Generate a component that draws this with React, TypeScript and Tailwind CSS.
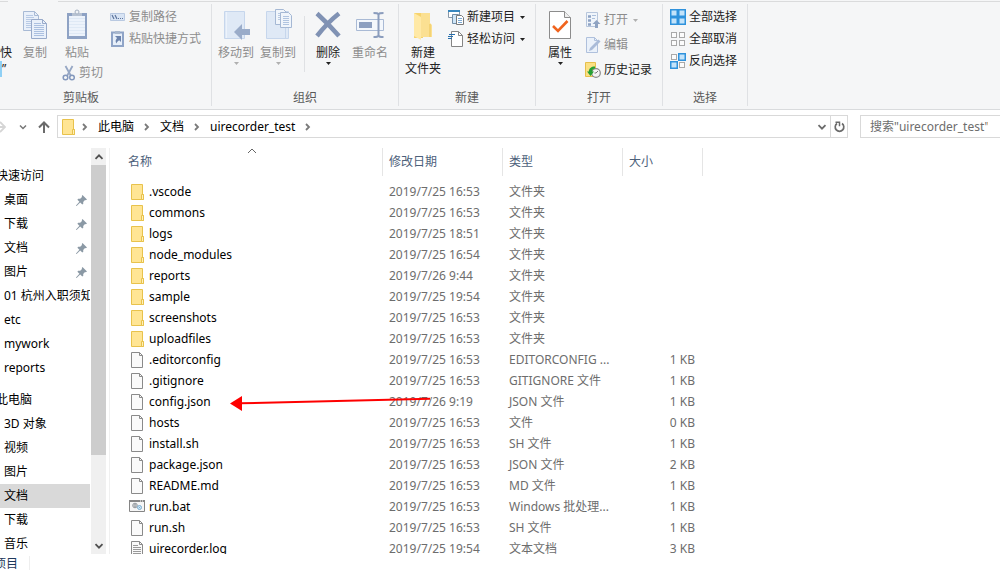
import React from 'react';
import clsx from 'clsx';

interface FileEntry {
  name: string;
  date: string;
  type: string;
  size?: string;
  icon: 'folder' | 'file' | 'bat' | 'log';
}

interface NavEntry {
  label: string;
  pinned?: boolean;
  active?: boolean;
}

const FILES: FileEntry[] = [
  { name: '.vscode', date: '2019/7/25 16:53', type: '文件夹', icon: 'folder' },
  { name: 'commons', date: '2019/7/25 16:53', type: '文件夹', icon: 'folder' },
  { name: 'logs', date: '2019/7/25 18:51', type: '文件夹', icon: 'folder' },
  { name: 'node_modules', date: '2019/7/25 16:54', type: '文件夹', icon: 'folder' },
  { name: 'reports', date: '2019/7/26 9:44', type: '文件夹', icon: 'folder' },
  { name: 'sample', date: '2019/7/25 19:54', type: '文件夹', icon: 'folder' },
  { name: 'screenshots', date: '2019/7/25 16:53', type: '文件夹', icon: 'folder' },
  { name: 'uploadfiles', date: '2019/7/25 16:53', type: '文件夹', icon: 'folder' },
  { name: '.editorconfig', date: '2019/7/25 16:53', type: 'EDITORCONFIG ...', size: '1 KB', icon: 'file' },
  { name: '.gitignore', date: '2019/7/25 16:53', type: 'GITIGNORE 文件', size: '1 KB', icon: 'file' },
  { name: 'config.json', date: '2019/7/26 9:19', type: 'JSON 文件', size: '1 KB', icon: 'file' },
  { name: 'hosts', date: '2019/7/25 16:53', type: '文件', size: '0 KB', icon: 'file' },
  { name: 'install.sh', date: '2019/7/25 16:53', type: 'SH 文件', size: '1 KB', icon: 'file' },
  { name: 'package.json', date: '2019/7/25 16:53', type: 'JSON 文件', size: '2 KB', icon: 'file' },
  { name: 'README.md', date: '2019/7/25 16:53', type: 'MD 文件', size: '1 KB', icon: 'file' },
  { name: 'run.bat', date: '2019/7/25 16:53', type: 'Windows 批处理...', size: '1 KB', icon: 'bat' },
  { name: 'run.sh', date: '2019/7/25 16:53', type: 'SH 文件', size: '1 KB', icon: 'file' },
  { name: 'uirecorder.log', date: '2019/7/25 19:54', type: '文本文档', size: '3 KB', icon: 'log' },
];

const QUICK_ACCESS: NavEntry[] = [
  { label: '桌面', pinned: true },
  { label: '下载', pinned: true },
  { label: '文档', pinned: true },
  { label: '图片', pinned: true },
  { label: '01 杭州入职须知' },
  { label: 'etc' },
  { label: 'mywork' },
  { label: 'reports' },
];

const THIS_PC: NavEntry[] = [
  { label: '3D 对象' },
  { label: '视频' },
  { label: '图片' },
  { label: '文档', active: true },
  { label: '下载' },
  { label: '音乐' },
];

/* ---------- Small icons ---------- */

function FolderIcon() {
  return (
    <svg width="16" height="16" viewBox="0 0 16 16" className="shrink-0">
      <path d="M2.5.5h11v10h1v5h-12z" fill="#ffe594" stroke="#e8c24c" />
      <path d="M12.5 15.500v-5h2v5z" fill="#fff0b8" stroke="#e8c24c" />
    </svg>
  );
}

function FileIcon({ lined = false }: { lined?: boolean }) {
  return (
    <svg width="16" height="16" viewBox="0 0 16 16" className="shrink-0">
      <path d="M2.500.5h8l3 3v12h-11z" fill="#fafafa" stroke="#8a8a8a" />
      <path d="M10.500.5v3h3" fill="none" stroke="#8a8a8a" />
      {lined && <path d="M4 4.500h5M4 6.500h8M4 8.500h8M4 10.500h8M4 12.500h8" stroke="#9a9a9a" />}
    </svg>
  );
}

function BatIcon() {
  return (
    <svg width="16" height="16" viewBox="0 0 16 16" className="shrink-0">
      <path d="M.5 1.500h15v11H.5z" fill="#f6f6f6" stroke="#858585" />
      <path d="M0 2h16" stroke="#858585" strokeWidth="2" />
      <path d="M11 2h1M13 2h1" stroke="#fff" />
      <circle cx="6" cy="6.500" r="2.300" fill="#eee" stroke="#8f959b" />
      <circle cx="6" cy="6.500" r="1" fill="none" stroke="#8f959b" />
      <circle cx="10.500" cy="8.500" r="2" fill="#d8ecf8" stroke="#78acd0" />
      <circle cx="10.500" cy="8.500" r=".7" fill="#78acd0" />
    </svg>
  );
}

function EntryIcon({ icon }: { icon: FileEntry['icon'] }) {
  if (icon === 'folder') return <FolderIcon />;
  if (icon === 'bat') return <BatIcon />;
  return <FileIcon lined={icon === 'log'} />;
}

function PinIcon() {
  return (
    <svg width="11" height="11" viewBox="0 0 11 11" className="shrink-0">
      <path d="M6.500 0 11 4.500 9.800 5.200 9 5 7.200 6.900 7.300 8.800 6.300 9.600 4.200 7.500.6 11 0 10.800 0 10.400 3.400 6.700 1.400 4.700 2.200 3.700 4.200 3.800 6 2 5.800 1z" fill="#8b99a5" />
    </svg>
  );
}

function Chevron({ dir, className }: { dir: 'right' | 'down' | 'up'; className?: string }) {
  const paths = {
    right: 'M3 2l3 3-3 3',
    down: 'M1.500 3.200 5 6.700l3.500-3.500',
    up: 'M1.500 6.800 5 3.300l3.500 3.500',
  };
  return (
    <svg width="10" height="10" viewBox="0 0 10 10" className={clsx('shrink-0', className)}>
      <path d={paths[dir]} fill="none" stroke="currentColor" strokeWidth="1.800" />
    </svg>
  );
}

function Caret({ muted = false }: { muted?: boolean }) {
  return (
    <svg width="5" height="3" viewBox="0 0 5 3" className="shrink-0">
      <path d="M0 0h5L2.500 3z" fill={muted ? '#b0b0b0' : '#222'} />
    </svg>
  );
}

/* ---------- Ribbon icons ---------- */

function CopyIcon() {
  return (
    <svg width="26" height="32" viewBox="0 0 26 32">
      <path d="M1.500 3.500h11l4 4v15h-15z" fill="#e9f0fa" stroke="#a8bad5" />
      <path d="M12.500 3.500v4h4" fill="none" stroke="#a8bad5" />
      <path d="M4 7.500h7M4 9.500h8M4 11.500h8M4 13.500h6M4 15.500h6M4 17.500h6M4 19.500h6" stroke="#b8cae5" />
      <path d="M9.500 11.500h11l4 4v15h-15z" fill="#e9f0fa" stroke="#98aaca" />
      <path d="M20.500 11.500v4h4" fill="none" stroke="#98aaca" />
      <path d="M12 15.500h7M12 17.500h10M12 19.500h10M12 21.500h10M12 23.500h10M12 25.500h10M12 27.500h10" stroke="#abc0e0" />
    </svg>
  );
}

function PasteIcon() {
  return (
    <svg width="22" height="32" viewBox="0 0 22 32">
      <path d="M1 5h20v26H1z" fill="#8ea2c4" />
      <path d="M3 8h16v20H3z" fill="#edf3fb" />
      <path d="M3 10.500h16M3 13.500h16M3 16.500h16M3 19.500h16M3 22.500h16M3 25.500h16" stroke="#dfe9f5" />
      <path d="M6 8V5h3a2 2 0 0 1 4 0h3v3z" fill="#b7c2d2" />
      <circle cx="11" cy="4" r="2" fill="#f0f3f7" stroke="#a5b1c2" />
    </svg>
  );
}

function ScissorsIcon() {
  return (
    <svg width="14" height="16" viewBox="0 0 14 16" className="shrink-0">
      <path d="M3.500 1 9 11M10.500 1 5 11" stroke="#96a7c4" strokeWidth="1.800" />
      <circle cx="3.500" cy="12.500" r="2.300" fill="none" stroke="#8398bd" strokeWidth="1.500" />
      <circle cx="10" cy="12.500" r="2.300" fill="none" stroke="#8398bd" strokeWidth="1.500" />
    </svg>
  );
}

function PathIcon() {
  return (
    <svg width="16" height="16" viewBox="0 0 16 16" className="shrink-0">
      <path d="M.5 4.500h14v7H.5z" fill="#d8e4f4" stroke="#b9c9e1" />
      <path d="m2 6 2 4M5 6l2 4" stroke="#5e759e" strokeWidth="1.200" />
      <path d="M8 9.500h1M10 9.500h1M12 9.500h1" stroke="#5e759e" />
    </svg>
  );
}

function ShortcutIcon() {
  return (
    <svg width="16" height="16" viewBox="0 0 16 16" className="shrink-0">
      <path d="M2 1.500h11v13.500H2z" fill="#e7eff9" stroke="#8fa4c7" strokeWidth="2" />
      <path d="M5 0h5v3H5z" fill="#a8b7cd" />
      <path d="M5 5h6v6L9.200 9.200C7.500 10 7 11 6.500 12.500 5 10.500 5.500 9 7 7z" fill="#6d84ad" />
    </svg>
  );
}

function MoveToIcon() {
  return (
    <svg width="28" height="32" viewBox="0 0 28 32">
      <path d="M2.500 3.500h20v27h-20z" fill="#dfe9f6" stroke="#c6d6ec" />
      <path d="M4.500 4v26" stroke="#edf3fb" />
      <path d="M12 24 20 16v5h8v6h-8v5z" fill="#9aacc9" />
    </svg>
  );
}

function CopyToIcon() {
  return (
    <svg width="28" height="32" viewBox="0 0 28 32">
      <path d="M2.500 3.500h22v27h-22z" fill="#dfe9f6" stroke="#c6d6ec" />
      <path d="M21.500 19v11" stroke="#c6d6ec" />
      <path d="M11.500 1.500h8l3 3v12h-11z" fill="#f0f5fb" stroke="#a5b8d4" />
      <path d="M14 5.500h6M14 7.500h6M14 9.500h6M14 11.500h6" stroke="#b9cae2" />
      <path d="M16.500 4.500h8l3 3v12h-11z" fill="#f0f5fb" stroke="#a5b8d4" />
      <path d="M19 8.500h6M19 10.500h6M19 12.500h6M19 14.500h6M19 16.500h6" stroke="#b0c4e0" />
    </svg>
  );
}

function DeleteIcon() {
  return (
    <svg width="26" height="32" viewBox="0 0 26 32">
      <path d="M2 5.500C8 11 17 20 24 28M24 5.500C17 11 9 19 2 28" fill="none" stroke="#8092b4" strokeWidth="4.500" />
    </svg>
  );
}

function RenameIcon() {
  return (
    <svg width="28" height="32" viewBox="0 0 28 32">
      <path d="M.5 11.500h27v11H.5z" fill="#f3f7fc" stroke="#a9bad5" />
      <path d="M3 14h13v6H3z" fill="#8c9fc0" />
      <path d="M22.500 6v22M17.500 5c3 0 5 0 5 2 0-2 2-2 5-2M17.500 29c3 0 5 0 5-2 0 2 2 2 5 2" fill="none" stroke="#8b9dbd" strokeWidth="2" />
    </svg>
  );
}

function NewFolderIcon() {
  return (
    <svg width="20" height="32" viewBox="0 0 20 32">
      <path d="M1 5h9v25H1z" fill="#f6d36e" />
      <path d="M8 5h9v10l2 2v12H8z" fill="#fbe092" />
      <path d="M1 5 8 9v23l-7-4z" fill="#ffe9a6" />
      <path d="M17 16v13" stroke="#ecc65b" />
    </svg>
  );
}

function PropertiesIcon() {
  return (
    <svg width="22" height="32" viewBox="0 0 22 32">
      <path d="M.5 3.500h15l6 6v21H.5z" fill="#fff" stroke="#8c8c8c" />
      <path d="M15.500 3.500v6h6" fill="#eee" stroke="#8c8c8c" />
      <path d="m4 18 5 5 9.500-10" fill="none" stroke="#f0641e" strokeWidth="2.600" />
    </svg>
  );
}

function NewItemIcon() {
  return (
    <svg width="16" height="16" viewBox="0 0 16 16" className="shrink-0">
      <path d="M.5 1.500h11v7H.5z" fill="#fff" stroke="#8797a7" />
      <path d="M0 2h12" stroke="#3987be" strokeWidth="2" />
      <path d="M4.500 5.500h6v9h-6z" fill="#cfe6f8" stroke="#728fa8" />
      <path d="M8.500 6.500h5l2 2v7h-7z" fill="#fff" stroke="#7a7a7a" />
      <path d="M10 9.500h4M10 11.500h4M10 13.500h4" stroke="#7caad4" />
    </svg>
  );
}

function EasyAccessIcon() {
  return (
    <svg width="16" height="16" viewBox="0 0 16 16" className="shrink-0">
      <path d="M3.500.5h7l4 4v11h-11z" fill="#fff" stroke="#858585" />
      <path d="M10.500.5v4h4" fill="none" stroke="#858585" />
      <path d="M1 3.500h6M0 5.500h5M0 7.500h4" stroke="#276fae" strokeWidth="1.200" />
    </svg>
  );
}

function OpenIcon() {
  return (
    <svg width="16" height="16" viewBox="0 0 16 16" className="shrink-0">
      <path d="M1.500.5h11v14h-11z" fill="#f0f5fb" stroke="#b7c6dc" />
      <path d="M3 4.500h3M3 8.500h3M3 12.500h3" stroke="#8da2c4" strokeWidth="2.500" />
      <path d="M7 3.500h4M7 6.500h3" stroke="#abc0dc" />
      <path d="m11.500 8 4 4h-2.500v4h-3v-4H7.500z" fill="#8fa3c2" />
    </svg>
  );
}

function EditIcon() {
  return (
    <svg width="16" height="16" viewBox="0 0 16 16" className="shrink-0">
      <path d="M1.500.5h8l3 3v12h-11z" fill="#eaf1fa" stroke="#afc0dc" />
      <path d="M9.500.5v3h3" fill="none" stroke="#afc0dc" />
      <path d="m4 14 1-3 8.500-8.500 2 2L7 13z" fill="#a9bbd8" />
    </svg>
  );
}

function HistoryIcon() {
  return (
    <svg width="16" height="16" viewBox="0 0 16 16" className="shrink-0">
      <path d="M.5.5h10v14H.5z" fill="#fbe083" stroke="#e6bf4c" />
      <circle cx="11" cy="11" r="4.300" fill="#f4f4f4" stroke="#8a8a8a" strokeWidth="1.200" />
      <path d="M11 11 13 9M11 11H9.500" fill="none" stroke="#777" />
      <path d="M10 4.500C6 4.500 4 6.500 3.800 9.500H2L5.500 14 9 9.500H7.200c0-2 1-3 2.800-3z" fill="#26a034" />
    </svg>
  );
}

function SelectIcon({ filled }: { filled: [boolean, boolean, boolean, boolean] }) {
  const corners = [[0, 0], [8, 0], [0, 8], [8, 8]];
  return (
    <svg width="16" height="16" viewBox="0 0 16 16" className="shrink-0">
      {corners.map(([x, y], i) =>
        filled[i] ? (
          <rect key={i} x={x + 0.75} y={y + 0.75} width="6.500" height="6.500" fill="#c3e3fa" stroke="#2f92dc" strokeWidth="1.500" />
        ) : (
          <rect key={i} x={x + 1.5} y={y + 1.5} width="5" height="5" fill="#fcfcfc" stroke="#a9a9a9" />
        ),
      )}
    </svg>
  );
}

/* ---------- Ribbon building blocks ---------- */

interface BigButtonProps {
  icon: React.ReactNode;
  label: string;
  secondLine?: string;
  muted?: boolean;
  caret?: boolean;
  className?: string;
}

function BigButton({ icon, label, secondLine, muted = false, caret = false, className = 'w-[42px]' }: BigButtonProps) {
  return (
    <button
      type="button"
      className={clsx('flex shrink-0 flex-col items-center whitespace-nowrap', muted ? 'text-[#8d8d8d]' : 'text-[#222]', className)}
    >
      <span className="mb-[5px] flex h-8 items-center">{icon}</span>
      <span>{label}</span>
      {secondLine && <span>{secondLine}</span>}
      {caret && <span className="flex pt-px"><Caret muted={muted} /></span>}
    </button>
  );
}

interface SmallButtonProps {
  icon: React.ReactNode;
  label: string;
  muted?: boolean;
  caret?: boolean;
}

function SmallButton({ icon, label, muted = false, caret = false }: SmallButtonProps) {
  return (
    <button
      type="button"
      className={clsx('flex items-center gap-[3px] whitespace-nowrap', muted ? 'text-[#8d8d8d]' : 'text-[#222]')}
    >
      {icon}
      <span>{label}</span>
      {caret && <span className="ml-0.5"><Caret muted={muted} /></span>}
    </button>
  );
}

interface RibbonGroupProps {
  title: string;
  className: string;
  titleClassName?: string;
  children: React.ReactNode;
}

function RibbonGroup({ title, className, titleClassName, children }: RibbonGroupProps) {
  return (
    <section aria-label={title} className={clsx('flex shrink-0 flex-col border-r border-[#dfe1e4]', className)}>
      <div className="flex flex-1 items-start pt-1">{children}</div>
      <div className={clsx('text-center text-[#5a5a5a]', titleClassName)}>{title}</div>
    </section>
  );
}

function Ribbon() {
  return (
    <header className="border-b border-[#d9dbdd] bg-[#f5f6f7]">
      {/* Lower edge of the tab strip, open under the active tab */}
      <div className="flex h-1 pt-px">
        <div className="w-2 border-t border-[#dadbdc]" />
        <div className="w-[50px]" />
        <div className="flex-1 border-t border-[#dadbdc]" />
      </div>

      <div className="flex h-[102px]">
        <RibbonGroup title="剪贴板" className="w-[212px]" titleClassName="pr-[49px]">
          <button type="button" className="flex w-3.5 shrink-0 flex-col items-start pt-[37px] text-[#222]">
            <span>快</span>
            <span className="border-l-2 border-[#8fd0f5]">”</span>
          </button>
          <BigButton icon={<CopyIcon />} label="复制" muted />
          <div className="ml-1.5 flex w-12 flex-col items-start gap-1">
            <BigButton icon={<PasteIcon />} label="粘贴" muted className="w-[30px]" />
            <SmallButton icon={<ScissorsIcon />} label="剪切" muted />
          </div>
          <div className="flex flex-col gap-1.5 pt-px">
            <SmallButton icon={<PathIcon />} label="复制路径" muted />
            <SmallButton icon={<ShortcutIcon />} label="粘贴快捷方式" muted />
          </div>
        </RibbonGroup>

        <RibbonGroup title="组织" className="w-[187px]">
          <div className="flex pl-[3px]">
            <BigButton icon={<MoveToIcon />} label="移动到" muted caret />
            <BigButton icon={<CopyToIcon />} label="复制到" muted caret />
            <div className="mt-2 mr-0.5 ml-[5px] h-14 w-px bg-[#dfe1e4]" />
            <BigButton icon={<DeleteIcon />} label="删除" caret />
            <BigButton icon={<RenameIcon />} label="重命名" muted />
          </div>
        </RibbonGroup>

        <RibbonGroup title="新建" className="w-[137px]">
          <div className="flex pl-[3px]">
            <BigButton icon={<NewFolderIcon />} label="新建" secondLine="文件夹" />
            <div className="ml-1 flex flex-col gap-1.5 pt-px">
              <SmallButton icon={<NewItemIcon />} label="新建项目" caret />
              <SmallButton icon={<EasyAccessIcon />} label="轻松访问" caret />
            </div>
          </div>
        </RibbonGroup>

        <RibbonGroup title="打开" className="w-[127px]">
          <div className="flex pl-[3px]">
            <BigButton icon={<PropertiesIcon />} label="属性" caret />
            <div className="ml-1 flex flex-col gap-[9px] pt-1">
              <SmallButton icon={<OpenIcon />} label="打开" muted caret />
              <SmallButton icon={<EditIcon />} label="编辑" muted />
              <SmallButton icon={<HistoryIcon />} label="历史记录" />
            </div>
          </div>
        </RibbonGroup>

        <RibbonGroup title="选择" className="w-[85px]">
          <div className="flex flex-col gap-1.5 pt-px pl-[7px]">
            <SmallButton icon={<SelectIcon filled={[true, true, true, true]} />} label="全部选择" />
            <SmallButton icon={<SelectIcon filled={[false, false, false, false]} />} label="全部取消" />
            <SmallButton icon={<SelectIcon filled={[false, true, true, false]} />} label="反向选择" />
          </div>
        </RibbonGroup>
      </div>
      <div className="h-[3px]" />
    </header>
  );
}

/* ---------- Address bar ---------- */

function AddressBar() {
  const crumbs = ['此电脑', '文档', 'uirecorder_test'];

  return (
    <div className="flex items-center pt-[5px] pb-2.5">
      <button type="button" aria-label="前进" className="w-[18px] text-[#d5d5d5]">
        <svg width="6" height="12" viewBox="0 0 6 12">
          <path d="M0 6h5M0 1l5 5-5 5" fill="none" stroke="currentColor" strokeWidth="1.800" />
        </svg>
      </button>
      <button type="button" aria-label="最近浏览的位置" className="flex w-5 text-[#777]">
        <svg width="10" height="10" viewBox="0 0 10 10">
          <path d="m2 3.500 3 3 3-3" fill="none" stroke="currentColor" strokeWidth="1.500" />
        </svg>
      </button>
      <button type="button" aria-label="上移" className="w-[19px] text-[#6b6b6b]">
        <svg width="12" height="12" viewBox="0 0 12 12">
          <path d="M6 12V1.500M1 6.500l5-5 5 5" fill="none" stroke="currentColor" strokeWidth="2" />
        </svg>
      </button>

      <div className="flex h-[23px] flex-1 items-center border border-[#d9d9d9]">
        <nav aria-label="地址" className="flex flex-1 items-center pl-0.5">
          <FolderIcon />
          {crumbs.map((crumb, index) => (
            <React.Fragment key={crumb}>
              <Chevron dir="right" className={clsx('mr-2 text-[#7a7a7a]', index === 0 ? 'ml-1' : 'ml-2')} />
              <a href="#" className="text-black">{crumb}</a>
            </React.Fragment>
          ))}
          <Chevron dir="right" className="mx-2 text-[#7a7a7a]" />
        </nav>
        <button type="button" aria-label="以前的位置" className="flex w-4 justify-center text-[#6b6b6b]">
          <Chevron dir="down" />
        </button>
        <button type="button" aria-label="刷新" className="flex h-full w-[17px] items-center justify-center border-l border-[#d9d9d9] text-[#6b6b6b]">
          <svg width="11" height="12" viewBox="0 0 11 12">
            <path d="M8 2.500A4.300 4.300 0 1 1 3 2.500" fill="none" stroke="currentColor" strokeWidth="1.700" />
            <path d="M1.500 1.200h4v4" fill="none" stroke="currentColor" strokeWidth="1.500" />
          </svg>
        </button>
      </div>

      <input
        type="search"
        aria-label="搜索"
        placeholder={'搜索"uirecorder_test"'}
        className="ml-3 h-[23px] w-[140px] border border-r-0 border-[#d9d9d9] pl-[9px] outline-none placeholder:text-[#6d6d6d]"
      />
    </div>
  );
}

/* ---------- Navigation pane ---------- */

function NavItem({ label, pinned, active }: NavEntry) {
  return (
    <li>
      <a
        href="#"
        className={clsx('flex h-6 items-center justify-between overflow-hidden pl-1 whitespace-nowrap text-black', active && 'bg-[#d9d9d9]')}
      >
        <span>{label}</span>
        {pinned && <span className="pr-[3px]"><PinIcon /></span>}
      </a>
    </li>
  );
}

function NavPane() {
  return (
    <aside className="flex shrink-0 border-r border-[#f0f0f0] pr-[3px]">
      <nav aria-label="导航窗格" className="mr-px w-[90px] overflow-hidden pt-4">
        <a href="#" className="-ml-1 flex h-6 items-center text-black">快速访问</a>
        <ul>
          {QUICK_ACCESS.map((item) => <NavItem key={item.label} {...item} />)}
        </ul>
        <a href="#" className="mt-2 -ml-1 flex h-6 items-center text-black">此电脑</a>
        <ul>
          {THIS_PC.map((item) => <NavItem key={item.label} {...item} />)}
        </ul>
      </nav>
      <div className="flex w-[15px] flex-col bg-[#f0f0f0] text-[#505050]">
        <button type="button" aria-label="向上滚动" className="flex h-[17px] items-center justify-center"><Chevron dir="up" /></button>
        <div className="flex-1">
          <div className="h-[78%] bg-[#cdcdcd]" />
        </div>
        <button type="button" aria-label="向下滚动" className="flex h-[17px] items-center justify-center"><Chevron dir="down" /></button>
      </div>
    </aside>
  );
}

/* ---------- File list ---------- */

function FileList() {
  return (
    <main className="relative flex-1 overflow-hidden pl-[11px]">
      <table className="w-[582px] table-fixed border-separate border-spacing-0 text-left whitespace-nowrap">
        <colgroup>
          <col className="w-[262px]" />
          <col className="w-[120px]" />
          <col className="w-[120px]" />
          <col className="w-[80px]" />
        </colgroup>
        <thead className="text-[#4c607a]">
          <tr className="h-7">
            <th className="relative border-r border-[#e5e5e5] pl-[7px] font-normal">
              名称
              <svg width="10" height="6" viewBox="0 0 10 6" className="absolute inset-x-0 top-0 mx-auto">
                <path d="m1 5 4-4 4 4" fill="none" stroke="#666" />
              </svg>
            </th>
            <th className="border-r border-[#e5e5e5] pl-1.5 font-normal">修改日期</th>
            <th className="border-r border-[#e5e5e5] pl-1.5 font-normal">类型</th>
            <th className="border-r border-[#e5e5e5] pl-1.5 font-normal">大小</th>
          </tr>
        </thead>
        <tbody className="text-[#6d6d6d]">
          <tr aria-hidden="true" className="h-[5px]"><td colSpan={4} /></tr>
          {FILES.map((file) => (
            <tr key={file.name} className="h-[21px]">
              <td className="pl-2 text-black">
                <span className="flex items-center gap-1">
                  <EntryIcon icon={file.icon} />
                  {file.name}
                </span>
              </td>
              <td className="pl-1.5">{file.date}</td>
              <td className="pl-1.5">{file.type}</td>
              <td className="pr-2 text-right">{file.size}</td>
            </tr>
          ))}
        </tbody>
      </table>

      {/* Red annotation arrow pointing at config.json */}
      <svg width="202" height="18" viewBox="0 0 202 18" className="pointer-events-none absolute top-[247px] left-[120px]">
        <path d="M10 8.300 200 3.700" stroke="#fe0000" strokeWidth="2" />
        <path d="M0 8.500 12 1v15z" fill="#fe0000" />
      </svg>
    </main>
  );
}

export default function App() {
  return (
    <div className="flex h-screen flex-col overflow-hidden bg-white font-['Noto_Sans','Noto_Sans_CJK_SC',sans-serif] text-xs leading-4">
      <Ribbon />
      <AddressBar />
      <div className="flex min-h-0 flex-1">
        <NavPane />
        <FileList />
      </div>
      <footer className="flex h-4 shrink-0 items-center pt-1 text-[#1e395b]">
        <span className="-ml-1.5 border-r border-[#eee] pr-[11px]">项目</span>
      </footer>
    </div>
  );
}
